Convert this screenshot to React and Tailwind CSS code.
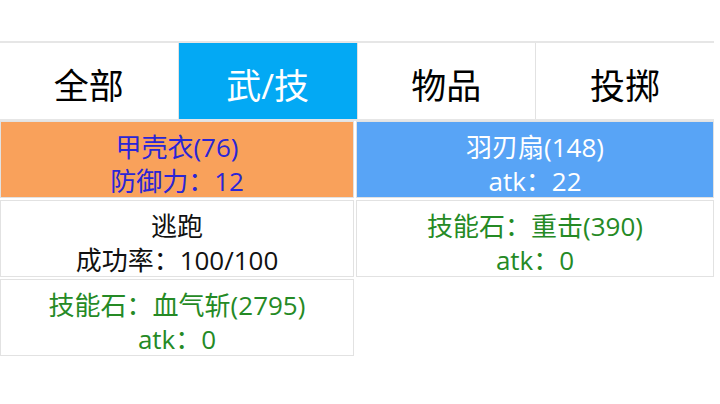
const tabs = [
  { label: '全部', active: false },
  { label: '武/技', active: true },
  { label: '物品', active: false },
  { label: '投掷', active: false },
];

const items = [
  { name: '甲壳衣(76)', stat: '防御力：12', bg: 'bg-[#f9a15b]', text: 'text-[#2a25d6]' },
  { name: '羽刃扇(148)', stat: 'atk：22', bg: 'bg-[#58a4f6]', text: 'text-white' },
  { name: '逃跑', stat: '成功率：100/100', bg: 'bg-white', text: 'text-[#111]' },
  { name: '技能石：重击(390)', stat: 'atk：0', bg: 'bg-white', text: 'text-[#258a25]' },
  { name: '技能石：血气斩(2795)', stat: 'atk：0', bg: 'bg-white', text: 'text-[#258a25]' },
];

const font = { fontFamily: '"Open Sans", "Noto Sans CJK SC", sans-serif' };

export default function App() {
  return (
    <div className="w-[720px] h-[404px] bg-white overflow-hidden" style={font}>
      <div className="pt-[41px] w-[714px]">
        {/* Tabs */}
        <div className="flex h-[80px] border-t-2 border-b-2 border-[#e6e6e6]">
          {tabs.map((t) => (
            <div
              key={t.label}
              className={`flex-1 flex items-center justify-center pt-[10px] text-[35px] border-r border-[#e2e2e2] last:border-r-0 ${
                t.active ? 'bg-[#03a9f4] text-white' : 'bg-white text-black'
              }`}
            >
              {t.label}
            </div>
          ))}
        </div>

        {/* Items */}
        <div className="grid grid-cols-[354px_358px] gap-x-[2px] gap-y-[2px]">
          {items.map((it) => (
            <div
              key={it.name}
              className={`h-[77px] pt-[8px] border border-[#e2e2e2] flex flex-col items-center justify-center text-[26px] leading-[34px] ${it.bg} ${it.text}`}
            >
              <span>{it.name}</span>
              <span>{it.stat}</span>
            </div>
          ))}
        </div>
      </div>
    </div>
  );
}
